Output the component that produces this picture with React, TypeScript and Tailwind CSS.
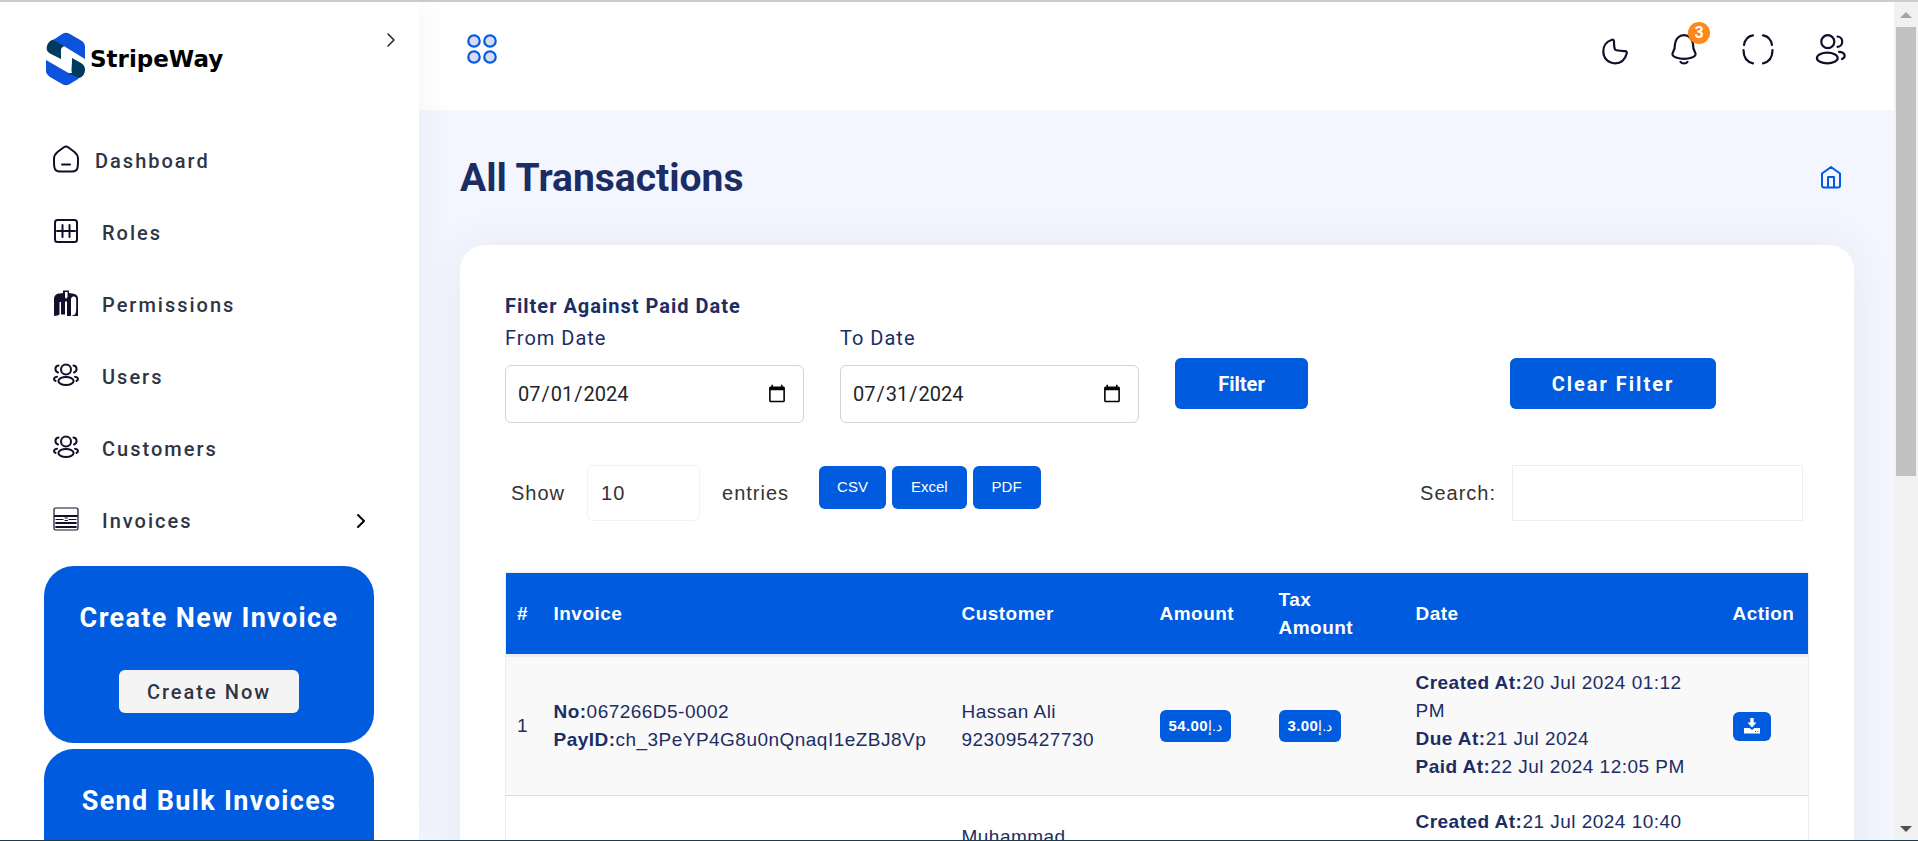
import type { ReactNode } from 'react';
import { ChevronRight } from 'lucide-react';

const stroke = {
    fill: 'none',
    stroke: 'currentColor',
    strokeLinecap: 'round' as const,
    strokeLinejoin: 'round' as const
};

function HomeIcon() {
    return (
        <svg viewBox="0 0 26 28" className="w-[26px] h-7" {...stroke} strokeWidth={2}>
            <path d="M10.8 2.2C12.2 1.2 13.8 1.2 15.2 2.2L21.5 7C24 9 25 11 25 14V17C25 24.500 24 26.500 18 26.500H8C2 26.500 1 24.500 1 17V14C1 11 2 9 4.500 7Z" />
            <path d="M9 19.500H17" />
        </svg>
    );
}

function RolesIcon() {
    return (
        <svg viewBox="0 0 26 28" className="w-[26px] h-7" {...stroke} strokeWidth={2}>
            <rect x="2" y="3" width="22" height="22" rx="2.500" />
            <path d="M4 14H22M9.500 8V20M16.500 8V20" />
        </svg>
    );
}

function PermissionsIcon() {
    return (
        <svg viewBox="0 0 26 28" className="w-[26px] h-7">
            <path fill="currentColor" fillRule="evenodd" d="M1 27V10C1 6.500 3.500 4.500 7 4.500L10 4V1.500H16V4L19 4.500C23 5 25 6.500 25 10V27H18.500L22 25.500C23 24 23.200 22 23.200 18V11C23.200 8 22 7 20 7.500C18.500 8 18 9 18 11V27H14V12.500H12V25.500H8V13H6.500V25.500L4.500 26.500Z M12 3H14.500V8L13 10L12 8Z" />
        </svg>
    );
}

function UsersIcon() {
    return (
        <svg viewBox="0 0 26 28" className="w-[26px] h-7" {...stroke} strokeWidth={2}>
            <circle cx="13" cy="8.500" r="5" />
            <ellipse cx="13" cy="20" rx="7.600" ry="4" />
            <path d="M5.500 4.500C1.500 5 1.500 10.500 5 11.500M20.500 4.500C24.500 5 24.500 10.500 21 11.500M4 15.800C1 16 0 18.500 2.500 20M22 15.800C25 16 26 18.500 23.500 20" />
        </svg>
    );
}

function InvoicesIcon() {
    return (
        <svg viewBox="0 0 26 28" className="w-[26px] h-7" {...stroke} strokeWidth={1.2}>
            <rect x="1" y="3" width="24" height="22" rx="1.500" />
            <path strokeWidth={1.8} d="M2 11H24M3 18H23M3 22H23" />
            <path d="M3 14.500H10M16 14.500H23M12 13H14.500M12 15.500H14.500" />
        </svg>
    );
}

function Logo() {
    return (
        <a href="#" aria-label="StripeWay" className="flex items-center gap-1 pt-1">
            <svg viewBox="0 0 40 54" className="w-10 h-[54px]">
                <path fill="#003a5c" d="M1 14C2 10 6 7 9 8L19 14C15 15 15 17 15 20V27L5 22C1 20 0 17 1 14Z" />
                <path fill="#0d52dd" d="M7 8L17 1.500Q20 0 23 1.500L36 9Q39 11 39 14V27L21 16Q14 11 7 8Z" />
                <path fill="#003a5c" d="M26 41C25 38 26 36 26 26L35 31C39 33 40 38 38 42C36 46 32 47 29 45L20 41Z" />
                <path fill="#0d52dd" d="M0 28L19 39Q26 43 33 46.500L23 52.500Q20 54 17 52.500L4 45Q0 42 0 39Z" />
            </svg>
            <span className="font-['DejaVu_Sans',sans-serif] text-[23px] font-bold text-black">StripeWay</span>
        </a>
    );
}

const navItems: { label: string; icon: ReactNode; more?: boolean }[] = [
    { label: 'Dashboard', icon: <HomeIcon /> },
    { label: 'Roles', icon: <RolesIcon /> },
    { label: 'Permissions', icon: <PermissionsIcon /> },
    { label: 'Users', icon: <UsersIcon /> },
    { label: 'Customers', icon: <UsersIcon /> },
    { label: 'Invoices', icon: <InvoicesIcon />, more: true }
];

function PromoCard({ title, action }: { title: string; action: string }) {
    return (
        <div className="h-[177px] rounded-[30px] bg-[#005bde] flex flex-col items-center pt-8">
            <h2 className="text-[27px] leading-10 font-bold text-white tracking-wider">{title}</h2>
            <button type="button" className="mt-8 h-[43px] w-[180px] rounded-md bg-[#f4f4f4] text-xl font-medium text-[#2f3544] tracking-widest">
                {action}
            </button>
        </div>
    );
}

function Sidebar() {
    return (
        <aside className="relative z-10 w-[419px] shrink-0 bg-white shadow-[0_0_40px_rgba(8,21,66,0.05)]">
            <div className="flex items-start justify-between pl-[46px] pr-4 pt-[26px]">
                <Logo />
                <button type="button" aria-label="Collapse sidebar" className="text-[#222222]">
                    <ChevronRight size={24} strokeWidth={1.5} />
                </button>
            </div>
            <nav className="mt-[39px] pl-[53px] pr-[46px] text-[#2f3544]">
                {navItems.map((item) => (
                    <a key={item.label} href="#" className="flex h-[72px] items-center">
                        <span className="pb-1 text-[#120f2a]">{item.icon}</span>
                        <span className={`flex-1 text-xl font-medium tracking-widest ${item.label === 'Dashboard' ? 'pl-4' : 'pl-[23px]'}`}>{item.label}</span>
                        {item.more && <ChevronRight size={24} className="text-black" />}
                    </a>
                ))}
            </nav>
            <div className="flex flex-col gap-[6px] pl-11 pr-[45px] pt-[9px]">
                <PromoCard title="Create New Invoice" action="Create Now" />
                <PromoCard title="Send Bulk Invoices" action="Send Now" />
            </div>
        </aside>
    );
}

function Topbar() {
    return (
        <header className="flex h-[108px] items-start justify-between bg-white pl-12 pr-[47px] pt-8 text-[#120f2a]">
            <button type="button" aria-label="Apps">
                <svg viewBox="0 0 30 30" className="size-[30px]" fill="#dadaf5" stroke="#005bde" strokeWidth={2.2}>
                    <circle cx="7" cy="7" r="5.700" />
                    <circle cx="23" cy="7" r="5.700" />
                    <circle cx="7" cy="23" r="5.700" />
                    <circle cx="23" cy="23" r="5.700" />
                </svg>
            </button>
            <div className="flex gap-[41px]">
                <button type="button" aria-label="Dark mode">
                    <svg viewBox="0 0 32 32" className="size-8" {...stroke} strokeWidth={2.2}>
                        <path d="M15.5 6C17 5 18 6 18 7.500C18 11 18.300 14 19 15.500C20.500 16.800 26 17 29 17.200C30.500 17.300 31 18 30.700 19.500C29 26 24.500 29.300 19 29.300C12 29.300 7.300 24 7.300 17.500C7.300 12 10.500 7.500 15.500 6Z" />
                    </svg>
                </button>
                <button type="button" aria-label="Notifications" className="relative">
                    <svg viewBox="0 0 32 32" className="size-8" {...stroke} strokeWidth={2.2}>
                        <path d="M15 1.200C10 1.200 6.500 5 6 10C6 15 5.500 15.500 4 18C2.500 21 4 22.500 7 23.500C12 25.200 18 25.200 23 23.500C26 22.500 27.500 21 26 18C24.500 15.500 24 15 24 10C23.500 5 20 1.200 15 1.200Z" />
                        <path d="M11.500 27.800C13 30 17 30 18.500 27.800" />
                    </svg>
                    <span className="absolute -top-3 left-[19px] flex size-[22px] items-center justify-center rounded-full bg-[#ff8819] text-base font-bold text-white">3</span>
                </button>
                <button type="button" aria-label="Full screen">
                    <svg viewBox="0 0 32 32" className="size-8" {...stroke} strokeWidth={2.2}>
                        <path d="M2 11C3 5 6 2 11 1.300M21 1.300C26 2 29 5 30 11M30.500 16C30.500 23 27 28 21 29.300M11 29.300C5 28 1.500 23 1.500 16" />
                    </svg>
                </button>
                <button type="button" aria-label="Accounts">
                    <svg viewBox="0 0 32 32" className="size-8" {...stroke} strokeWidth={2.2}>
                        <circle cx="12.800" cy="7.700" r="6.500" />
                        <ellipse cx="12.300" cy="24" rx="10.400" ry="5.400" />
                        <path d="M22.500 2.500C28.800 3 28.800 12.500 22.500 12.800M24 17.800C30 17.800 31.500 23 27 25" />
                    </svg>
                </button>
            </div>
        </header>
    );
}

function DateField({ id, label, value }: { id: string; label: string; value: string }) {
    return (
        <div className="w-[299px]">
            <label htmlFor={id} className="block text-xl leading-8 tracking-wider">{label}</label>
            <input id={id} type="date" defaultValue={value} className="mt-[11px] h-[58px] w-full rounded-md border border-[#ced4da] pl-[11px] pr-[14px] text-xl text-[#212529] bg-white" />
        </div>
    );
}

function Filters() {
    return (
        <form className="font-[Roboto,sans-serif]">
            <p className="text-xl leading-8 font-bold tracking-wider">Filter Against Paid Date</p>
            <div className="flex items-start gap-9">
                <DateField id="from" label="From Date" value="2024-07-01" />
                <DateField id="to" label="To Date" value="2024-07-31" />
                <div className="w-[299px] pt-9">
                    <button type="button" className="h-[51px] w-[133px] rounded-md bg-[#005bde] text-xl font-bold text-white">Filter</button>
                </div>
                <div className="pt-9">
                    <button type="button" className="h-[51px] w-[206px] rounded-md bg-[#005bde] text-xl font-bold tracking-widest text-white">Clear Filter</button>
                </div>
            </div>
        </form>
    );
}

function TableControls() {
    return (
        <div className="mt-[42px] flex items-start justify-between pl-[6px] pr-[6px] text-xl tracking-wider text-[#333333]">
            <div className="flex items-start">
                <label className="flex items-center">
                    Show
                    <select defaultValue="10" className="ml-[22px] mr-[22px] h-14 w-[113px] appearance-none rounded-md border border-[#f2f2f2] bg-white pl-[13px] text-xl">
                        <option>10</option>
                        <option>25</option>
                        <option>50</option>
                    </select>
                    entries
                </label>
                <div className="ml-[30px] flex gap-[6px] pt-px text-[15px] tracking-normal text-white">
                    <button type="button" className="h-[43px] rounded-md bg-[#005bde] px-[18px] pb-[2px]">CSV</button>
                    <button type="button" className="h-[43px] rounded-md bg-[#005bde] px-[19px] pb-[2px]">Excel</button>
                    <button type="button" className="h-[43px] rounded-md bg-[#005bde] px-[19px] pb-[2px]">PDF</button>
                </div>
            </div>
            <label className="flex items-center">
                Search:
                <input type="search" className="ml-4 h-14 w-[291px] border border-[#eeeeee] px-3" />
            </label>
        </div>
    );
}

interface Transaction {
    id: number;
    no: string;
    payId: string;
    customer: string;
    phone: string;
    amount: string;
    tax: string;
    created: string;
    due: string;
    paid: string;
}

const transactions: Transaction[] = [
    {
        id: 1,
        no: '067266D5-0002',
        payId: 'ch_3PeYP4G8u0nQnaqI1eZBJ8Vp',
        customer: 'Hassan Ali',
        phone: '923095427730',
        amount: '54.00',
        tax: '3.00',
        created: '20 Jul 2024 01:12 PM',
        due: '21 Jul 2024',
        paid: '22 Jul 2024 12:05 PM'
    },
    {
        id: 2,
        no: '067266D5-0001',
        payId: 'ch_3PeYP4G8u0nQnaqI1eZBJ8Vp',
        customer: 'Muhammad Hassan',
        phone: '923095427730',
        amount: '54.00',
        tax: '3.00',
        created: '21 Jul 2024 10:40 AM',
        due: '21 Jul 2024',
        paid: '22 Jul 2024 12:05 PM'
    }
];

function Money({ value }: { value: string }) {
    return (
        <span className="inline-flex h-8 items-center rounded-md bg-[#005bde] px-[9px] text-[15px] font-bold tracking-wide text-white">
            {value}
            <span className="text-sm font-normal">د.إ</span>
        </span>
    );
}

function TransactionTable() {
    return (
        <table className="mt-[51px] w-full table-fixed border border-[#eeeeee] text-left text-[19px] leading-7 tracking-wide">
            <thead className="bg-[#005bde] text-white">
                <tr className="h-[83px] border-b-[3px] border-[#eeeeee]">
                    <th className="w-[38px] pl-[11px]">#</th>
                    <th className="w-[408px] pl-[10px]">Invoice</th>
                    <th className="w-[198px] pl-[10px]">Customer</th>
                    <th className="w-[119px] pl-[10px]">Amount</th>
                    <th className="w-[137px] pl-[10px]">Tax<br />Amount</th>
                    <th className="pl-[10px]">Date</th>
                    <th className="w-[86px] pl-[10px]">Action</th>
                </tr>
            </thead>
            <tbody>
                {transactions.map((t) => (
                    <tr key={t.id} className="border-b border-[#dddddd] odd:bg-[#f9f9f9]">
                        <td className="pl-[11px]">{t.id}</td>
                        <td className="pl-[10px]"><b>No:</b>{t.no}<br /><b>PayID:</b>{t.payId}</td>
                        <td className="pl-[10px] pr-12">{t.customer}<br />{t.phone}</td>
                        <td className="pl-[10px]"><Money value={t.amount} /></td>
                        <td className="pl-[10px]"><Money value={t.tax} /></td>
                        <td className="pt-3 pb-[14px] pl-[10px] pr-8"><b>Created At:</b>{t.created}<br /><b>Due At:</b>{t.due}<br /><b>Paid At:</b>{t.paid}</td>
                        <td className="pl-[10px]">
                            <button type="button" aria-label="Download" className="flex h-[29px] w-[38px] items-center justify-center rounded-md bg-[#005bde] text-white">
                                <svg viewBox="0 0 16 16" className="size-4" fill="currentColor">
                                    <path d="M6.300 0H9.700V4.500H12.500L8 9.500L3.500 4.500H6.300Z" />
                                    <path fillRule="evenodd" d="M0 10H5.500L8 12L10.500 10H16V15.500H0ZM11 13H12V14H11ZM13.500 13H14.500V14H13.500Z" />
                                </svg>
                            </button>
                        </td>
                    </tr>
                ))}
            </tbody>
        </table>
    );
}

function Scrollbar() {
    return (
        <div className="flex w-6 shrink-0 flex-col items-center bg-[#f1f1f1]" aria-hidden="true">
            <svg viewBox="0 0 12 6" className="mt-[10px] mb-[9px] h-[6px] w-3" fill="#a3a3a3"><path d="M0 6L6 0L12 6Z" /></svg>
            <div className="h-[449px] w-5 bg-[#c1c1c1]" />
            <svg viewBox="0 0 12 6" className="mt-auto mb-2 h-[6px] w-3" fill="#505050"><path d="M0 0L6 6L12 0Z" /></svg>
        </div>
    );
}

export default function App() {
    return (
        <div className="flex h-screen overflow-hidden border-t-2 border-b border-t-[#cccccc] border-b-[#1f3a4a] bg-[#f3f6ff] font-['Roboto',sans-serif]">
            <Sidebar />
            <div className="min-w-0 flex-1">
                <Topbar />
                <main className="pl-[41px] pr-10 text-[#1c2d64]">
                    <div className="flex items-center justify-between pt-10 pr-3">
                        <h1 className="text-[39px] leading-[56px] font-bold">All Transactions</h1>
                        <a href="#" aria-label="Home" className="text-[#005bde]">
                            <svg viewBox="0 0 22 24" className="h-6 w-[22px]" {...stroke} strokeWidth={2}>
                                <path d="M2 7.500L11 1L20 7.500V19.500Q20 21.500 18 21.500H4Q2 21.500 2 19.500ZM8 21V11H14V21" />
                            </svg>
                        </a>
                    </div>
                    <section className="mt-[39px] rounded-t-[25px] bg-white px-[45px] pt-[45px] shadow-[0_0_50px_rgba(8,21,40,0.06)] font-['Liberation_Sans',Arial,sans-serif]">
                        <Filters />
                        <TableControls />
                        <TransactionTable />
                    </section>
                </main>
            </div>
            <Scrollbar />
        </div>
    );
}
